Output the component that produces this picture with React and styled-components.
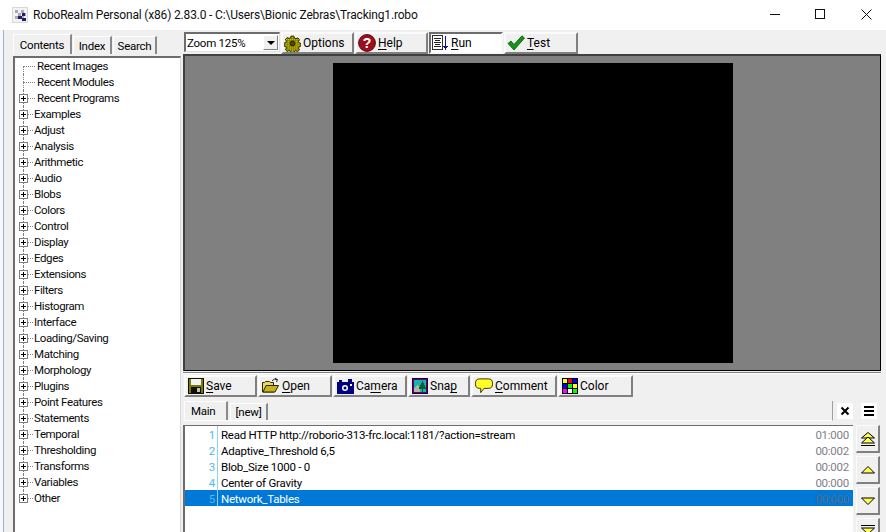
import React from 'react';
import styled, { createGlobalStyle } from 'styled-components';

const GlobalStyle = createGlobalStyle`
  html, body {
    margin: 0;
    padding: 0;
    background: #f0f0f0;
  }
  * {
    box-sizing: border-box;
  }
`;

const TREE_ITEMS = [
  'Examples', 'Adjust', 'Analysis', 'Arithmetic', 'Audio', 'Blobs', 'Colors', 'Control',
  'Display', 'Edges', 'Extensions', 'Filters', 'Histogram', 'Interface', 'Loading/Saving',
  'Matching', 'Morphology', 'Plugins', 'Point Features', 'Statements', 'Temporal',
  'Thresholding', 'Transforms', 'Variables', 'Other',
];

const PIPELINE = [
  { text: 'Read HTTP http://roborio-313-frc.local:1181/?action=stream', time: '01:000' },
  { text: 'Adaptive_Threshold 6,5', time: '00:002' },
  { text: 'Blob_Size 1000 - 0', time: '00:002' },
  { text: 'Center of Gravity', time: '00:000' },
  { text: 'Network_Tables', time: '00:000', selected: true },
];

const AppIcon = () => (
  <svg width="16" height="16" viewBox="0 0 16 16" shapeRendering="crispEdges">
    <rect width="16" height="16" fill="#d8d8d8" />
    <rect x="1" y="1" width="14" height="14" fill="#f2f2f2" />
    <path d="M3 3h3v3H3zM9 3h3v3H9zM6 6h3v3H6zM12 6h2v3h-2zM3 9h3v3H3zM9 9h3v3H9z" fill="#a8a8b8" />
    <path d="M6 9h4v3H6zM10 6h3v3h-3zM10 11h4v3h-4z" fill="#20206a" />
  </svg>
);

const GearIcon = () => (
  <svg width="17" height="17" viewBox="0 0 17 17">
    <defs>
      <pattern id="gearDither" width="2" height="2" patternUnits="userSpaceOnUse">
        <rect width="2" height="2" fill="#8a8000" />
        <rect width="1" height="1" fill="#d8d000" />
      </pattern>
    </defs>
    <path
      d="M7 1h3l.5 2 1.7.8L14 2.8l1.9 2-1 1.8.7 1.6 2 .6v2.600l-2 .6-.7 1.700 1 1.700-2 1.900-1.800-1-1.600.6-.5 2H7l-.5-2-1.700-.7-1.800 1-1.900-1.900 1-1.800-.7-1.600-2-.6V8.400l2-.6.7-1.600-1-1.800 1.900-2 1.800 1 1.600-.7z"
      transform="translate(.4 .2) scale(.95)"
      fill="url(#gearDither)"
      stroke="#1c1c00"
      strokeWidth="1"
    />
    <circle cx="8.500" cy="8.500" r="2.400" fill="#504a00" stroke="#1c1c00" />
  </svg>
);

const HelpIcon = () => (
  <svg width="18" height="18" viewBox="0 0 18 18">
    <circle cx="9" cy="9" r="8.400" fill="#9c0f1c" stroke="#5c0a10" />
    <path d="M4 6a6 5 0 0 1 10 0" fill="#c95560" opacity=".6" />
    <text x="9" y="14" textAnchor="middle" fontFamily="Liberation Sans, sans-serif" fontWeight="700" fontSize="14" fill="#fff">?</text>
  </svg>
);

const RunIcon = () => (
  <svg width="17" height="16" viewBox="0 0 17 16" shapeRendering="crispEdges">
    <rect x=".5" y=".5" width="10" height="14" fill="#fff" stroke="#303030" />
    <path d="M2 3h7v1H2zM3 5h5v1H3zM2 7h7v1H2zM3 9h5v1H3zM2 11h7v1H2z" fill="#202020" />
    <path d="M13 1h1v10h2l-2.500 4L11 11h2z" fill="#101080" />
  </svg>
);

const CheckIcon = () => (
  <svg width="18" height="16" viewBox="0 0 18 16">
    <path d="M1 8.500 4 6l3 3.500L15 .8 17.500 3 7 15z" fill="#149614" stroke="#0a4f0a" strokeWidth=".8" />
  </svg>
);

const SaveIcon = () => (
  <svg width="16" height="16" viewBox="0 0 16 16" shapeRendering="crispEdges">
    <rect width="16" height="16" fill="#101000" />
    <rect x="1" y="1" width="14" height="14" fill="#7b7b00" />
    <rect x="3" y="1" width="10" height="6" fill="#f2f2f2" />
    <rect x="3" y="9" width="10" height="6" fill="#101000" />
    <rect x="9" y="10" width="3" height="4" fill="#c0c0c0" />
  </svg>
);

const OpenIcon = () => (
  <svg width="18" height="16" viewBox="0 0 18 16">
    <path d="M.5 14V4.500h2l1-1h4l1 1h3v3h4l-3.500 6.500z" fill="#e8d860" stroke="#2a2a00" />
    <path d="M1 14l3-6.500h12.500L13 14z" fill="#c8b020" stroke="#2a2a00" />
    <path d="M10 3q2-3 5-1.500M13 .5l2.500 1-1 2.500" fill="none" stroke="#202020" />
  </svg>
);

const CameraIcon = () => (
  <svg width="17" height="15" viewBox="0 0 17 15" shapeRendering="crispEdges">
    <rect y="3" width="17" height="12" fill="#000080" />
    <rect x="2" y="1" width="3" height="2" fill="#000080" />
    <rect x="11" y="0" width="4" height="3" fill="#000080" />
    <rect x="13" y="5" width="2" height="2" fill="#fff" />
    <circle cx="8" cy="9" r="3" fill="#fff" shapeRendering="auto" />
    <circle cx="8" cy="9" r="1.500" fill="#000080" shapeRendering="auto" />
  </svg>
);

const SnapIcon = () => (
  <svg width="16" height="16" viewBox="0 0 16 16" shapeRendering="crispEdges">
    <rect width="16" height="16" fill="#000080" />
    <rect x="1" y="1" width="14" height="14" fill="#800020" />
    <rect x="2" y="2" width="12" height="12" fill="#18b0b0" />
    <path d="M2 14v-3l3-4 3 3v4z" fill="#c0b0a0" />
    <path d="M10 3h1v2h1v2h1v2h1v2h-3v3h-1v-3H7V9h1V7h1V5h1z" fill="#006030" />
  </svg>
);

const CommentIcon = () => (
  <svg width="18" height="16" viewBox="0 0 19 16">
    <defs>
      <pattern id="bubbleDither" width="2" height="2" patternUnits="userSpaceOnUse">
        <rect width="2" height="2" fill="#ffff00" />
        <rect width="1" height="1" fill="#ffffa0" />
      </pattern>
    </defs>
    <path d="M5 .5h9q4.500 0 4.500 4.500v1q0 4.500-4.500 4.500H9.500L6 15v-4.500H5Q.5 10.500.5 6V5Q.5.5 5 .5z" fill="url(#bubbleDither)" stroke="#303000" />
  </svg>
);

const COLOR_GRID = ['#ffff00', '#ff0000', '#0000ff', '#0000ff', '#00ff00', '#ffff00', '#ff00ff', '#ffffff', '#00ff00'];

const ColorIcon = () => (
  <svg width="16" height="16" viewBox="0 0 16 16" shapeRendering="crispEdges">
    <rect width="16" height="16" fill="#000" />
    {COLOR_GRID.map((fill, i) => (
      <rect key={i} x={1 + (i % 3) * 5} y={1 + Math.floor(i / 3) * 5} width="4" height="4" fill={fill} />
    ))}
  </svg>
);

const ArrowIcon = ({ double, down }) => (
  <svg width="18" height="16" viewBox="0 0 18 16" style={{ transform: down ? 'scaleY(-1)' : undefined }}>
    <defs>
      <pattern id="arrowDither" width="2" height="2" patternUnits="userSpaceOnUse">
        <rect width="2" height="2" fill="#ffff30" />
        <rect width="1" height="1" fill="#ffffc0" />
      </pattern>
    </defs>
    {double ? (
      <>
        <path d="M9 1.500 15.500 7h-13z" fill="url(#arrowDither)" stroke="#000" />
        <path d="M9 6l6.500 6h-13z" fill="url(#arrowDither)" stroke="#000" />
        <path d="M2 14.500h14" stroke="#000" />
      </>
    ) : (
      <path d="M9 4.500l6.500 6.500h-13z" fill="url(#arrowDither)" stroke="#000" />
    )}
  </svg>
);

const App = () => (
  <>
    <GlobalStyle />
    <Window>
      <EdgeStrip />
      <Frame>
        <TitleBar>
          <AppIcon />
          <TitleText>RoboRealm Personal (x86) 2.83.0 - C:\Users\Bionic Zebras\Tracking1.robo</TitleText>
          <WindowControls>
            <WindowButton>
              <svg width="11" height="11" viewBox="0 0 11 11" shapeRendering="crispEdges"><path d="M0 5h10v1H0z" fill="#111" /></svg>
            </WindowButton>
            <WindowButton>
              <svg width="11" height="11" viewBox="0 0 11 11" shapeRendering="crispEdges"><rect x=".5" y=".5" width="9" height="9" fill="none" stroke="#111" /></svg>
            </WindowButton>
            <CloseButton>
              <svg width="11" height="11" viewBox="0 0 11 11"><path d="M.5.5l10 10M10.500.5l-10 10" stroke="#111" fill="none" /></svg>
            </CloseButton>
          </WindowControls>
        </TitleBar>
        <Workspace>
          <Sidebar>
            <SideTabs>
              <SideTab $active $width={59}>Contents</SideTab>
              <SideTab $width={39}>Index</SideTab>
              <SideTab $width={44}>Search</SideTab>
            </SideTabs>
            <Tree>
              <TreeRow $deep $first><TreeLabel $deep>Recent Images</TreeLabel></TreeRow>
              <TreeRow $deep><TreeLabel $deep>Recent Modules</TreeLabel></TreeRow>
              <TreeRow $deep><Expander /><TreeLabel $deep>Recent Programs</TreeLabel></TreeRow>
              {TREE_ITEMS.map((item, i) => (
                <TreeRow key={item} $last={i === TREE_ITEMS.length - 1}>
                  <Expander />
                  <TreeLabel>{item}</TreeLabel>
                </TreeRow>
              ))}
            </Tree>
          </Sidebar>
          <Content>
            <Toolbar>
              <ZoomSelect>
                <ZoomValue>Zoom 125%</ZoomValue>
                <ZoomArrow />
              </ZoomSelect>
              <TopGroup>
                <ToolButton $width={73}><GearIcon /><span>Options</span></ToolButton>
                <ToolButton $width={73}><HelpIcon /><span><u>H</u>elp</span></ToolButton>
                <ToolButton $width={74} $pressed><RunIcon /><span><u>R</u>un</span></ToolButton>
                <ToolButton $width={74}><CheckIcon /><span><u>T</u>est</span></ToolButton>
              </TopGroup>
            </Toolbar>
            <Preview>
              <VideoFrame />
            </Preview>
            <Divider />
            <BottomToolbar>
              <ToolButton $width={73}><SaveIcon /><span><u>S</u>ave</span></ToolButton>
              <ToolButton $width={74}><OpenIcon /><span><u>O</u>pen</span></ToolButton>
              <ToolButton $width={74}><CameraIcon /><span>Ca<u>m</u>era</span></ToolButton>
              <ToolButton $width={62}><SnapIcon /><span>Sna<u>p</u></span></ToolButton>
              <ToolButton $width={86}><CommentIcon /><span><u>C</u>omment</span></ToolButton>
              <ToolButton $width={75}><ColorIcon /><span>Color</span></ToolButton>
            </BottomToolbar>
            <ProgramTabs>
              <TabStrip>
                <ProgramTab $active>Main</ProgramTab>
                <ProgramTab>[new]</ProgramTab>
              </TabStrip>
              <TabAction>
                <svg width="10" height="10" viewBox="0 0 10 10"><path d="M1.500 1.500l7 7M8.500 1.500l-7 7" stroke="#000" strokeWidth="2" /></svg>
              </TabAction>
              <TabAction>
                <svg width="12" height="11" viewBox="0 0 12 11" shapeRendering="crispEdges"><path d="M1 0h10v2H1zM1 4h10v2H1zM1 8h10v2H1z" fill="#000" /></svg>
              </TabAction>
            </ProgramTabs>
            <PipelineArea>
              <PipelineList>
                {PIPELINE.map((step, i) => (
                  <PipelineRow key={step.text} $selected={step.selected}>
                    <StepNumber>{i + 1}</StepNumber>
                    <StepName>{step.text}</StepName>
                    <StepTime $selected={step.selected}>{step.time}</StepTime>
                  </PipelineRow>
                ))}
              </PipelineList>
              <MoveButtons>
                <MoveButton><ArrowIcon double /></MoveButton>
                <MoveButton><ArrowIcon /></MoveButton>
                <MoveButton><ArrowIcon down /></MoveButton>
                <MoveButton><ArrowIcon double down /></MoveButton>
              </MoveButtons>
            </PipelineArea>
          </Content>
        </Workspace>
      </Frame>
    </Window>
  </>
);

export default App;

const Window = styled.div`
  width: 886px;
  height: 532px;
  display: flex;
  overflow: hidden;
  background: #f0f0f0;
  color: #000;
  font-family: Roboto, "Liberation Sans", sans-serif;
  font-size: 11.5px;
  letter-spacing: -0.25px;
`;

const EdgeStrip = styled.div`
  width: 4px;
  margin-top: 30px;
  background: #f6f8fb;
  border-right: 1px solid #9fb4c6;
`;

const Frame = styled.div`
  flex: 1;
  min-width: 0;
  display: flex;
  flex-direction: column;
`;

const TitleBar = styled.div`
  height: 30px;
  flex: none;
  margin-left: -4px;
  padding-left: 12px;
  display: flex;
  align-items: center;
  background: #fff;
`;

const TitleText = styled.div`
  margin-left: 5px;
  font-size: 12px;
  letter-spacing: -0.17px;
  color: #101010;
  white-space: nowrap;
`;

const WindowControls = styled.div`
  margin-left: auto;
  padding-bottom: 1px;
  display: flex;
  height: 100%;
`;

const WindowButton = styled.div`
  width: 45px;
  display: flex;
  align-items: center;
  justify-content: center;
`;

const CloseButton = styled(WindowButton)`
  width: 43px;
  padding-left: 4px;
`;

const Workspace = styled.div`
  flex: 1;
  min-height: 0;
  display: flex;
`;

const Sidebar = styled.div`
  width: 179px;
  flex: none;
  padding: 2px 2px 0 9px;
  display: flex;
  flex-direction: column;
`;

const SideTabs = styled.div`
  height: 22px;
  margin-bottom: 2px;
  flex: none;
  display: flex;
  align-items: flex-end;
  gap: 1px;
`;

const SideTab = styled.div`
  height: ${({ $active }) => ($active ? '20px' : '18px')};
  width: ${({ $width }) => $width}px;
  display: flex;
  align-items: center;
  justify-content: center;
  border-top: 1px solid #fff;
  border-left: 1px solid #fff;
  border-right: 2px solid #8a8a8a;
  white-space: nowrap;
`;

const Tree = styled.div`
  flex: 1;
  background: #fff;
  border-top: 2px solid #6d6d6d;
  border-left: 2px solid #6d6d6d;
  border-right: 1px solid #d8d8d8;
  overflow: hidden;
  letter-spacing: -0.4px;
`;

const TreeRow = styled.div`
  position: relative;
  height: 16px;
  display: flex;
  align-items: center;
  &::before {
    content: '';
    position: absolute;
    left: 8px;
    top: ${({ $first }) => ($first ? '8px' : '0')};
    height: ${({ $first, $last }) => ($first ? '8px' : $last ? '8px' : '16px')};
    border-left: 1px dotted #808080;
  }
  &::after {
    content: '';
    position: absolute;
    left: 8px;
    top: 8px;
    width: ${({ $deep }) => ($deep ? '12px' : '10px')};
    border-top: 1px dotted #808080;
  }
`;

const Expander = styled.div`
  position: absolute;
  z-index: 1;
  left: 4px;
  top: 4px;
  width: 9px;
  height: 9px;
  background:
    linear-gradient(#000, #000) center / 5px 1px no-repeat,
    linear-gradient(#000, #000) center / 1px 5px no-repeat,
    #fff;
  border: 1px solid #808080;
`;

const TreeLabel = styled.span`
  margin-left: ${({ $deep }) => ($deep ? '22px' : '19px')};
  white-space: nowrap;
  color: #0a0a0a;
`;

const Content = styled.div`
  flex: 1;
  min-width: 0;
  padding: 2px 5px 0 0;
  display: flex;
  flex-direction: column;
`;

const Toolbar = styled.div`
  height: 22px;
  flex: none;
  display: flex;
  align-items: flex-start;
  padding-left: 1px;
`;

const ZoomSelect = styled.div`
  width: 96px;
  height: 20px;
  flex: none;
  display: flex;
  align-items: center;
  background: #fff;
  border-top: 2px solid #6d6d6d;
  border-left: 2px solid #6d6d6d;
  border-right: 1px solid #e0e0e0;
  border-bottom: 1px solid #e0e0e0;
`;

const ZoomValue = styled.div`
  flex: 1;
  padding-left: 1px;
`;

const ZoomArrow = styled.div`
  width: 15px;
  height: 15px;
  margin-right: 1px;
  display: flex;
  align-items: center;
  justify-content: center;
  background: #f0f0f0;
  border: 1px solid;
  border-color: #fff #808080 #808080 #fff;
  &::before {
    content: '';
    border-style: solid;
    border-width: 4px 4px 0;
    border-color: #000 transparent transparent;
  }
`;

const TopGroup = styled.div`
  margin-left: 1px;
  display: flex;
  gap: 1px;
`;

const ToolButton = styled.div`
  width: ${({ $width }) => $width}px;
  height: 22px;
  flex: none;
  padding-left: 1px;
  display: flex;
  align-items: center;
  gap: 2px;
  font-size: 12px;
  letter-spacing: 0;
  background: ${({ $pressed }) => ($pressed ? '#fff' : '#f0f0f0')};
  border-style: solid;
  border-width: 2px;
  border-color: ${({ $pressed }) =>
    $pressed ? '#6d6d6d #f8f8f8 #f8f8f8 #6d6d6d' : '#fbfbfb #808080 #808080 #fbfbfb'};
  white-space: nowrap;
  u {
    text-underline-offset: 2px;
  }
`;

const Preview = styled.div`
  height: 317px;
  flex: none;
  display: flex;
  align-items: center;
  justify-content: center;
  background: #808080;
  border-top: 2px solid #404040;
  border-left: 2px solid #404040;
  border-right: 1px solid #000;
  border-bottom: 1px solid #000;
`;

const VideoFrame = styled.div`
  width: 400px;
  height: 300px;
  background: #000;
`;

const Divider = styled.div`
  height: 2px;
  flex: none;
  margin-top: 1px;
  background: #808080;
  border-bottom: 1px solid #fff;
`;

const BottomToolbar = styled.div`
  height: 23px;
  flex: none;
  margin-top: 1px;
  padding-left: 1px;
  display: flex;
  gap: 1px;
  ${ToolButton} {
    padding-left: 2px;
  }
`;

const ProgramTabs = styled.div`
  height: 24px;
  flex: none;
  margin-top: 3px;
  display: flex;
  align-items: flex-start;
`;

const TabStrip = styled.div`
  flex: 1;
  height: 20px;
  padding-left: 1px;
  display: flex;
  align-items: flex-end;
  gap: 2px;
  border-bottom: 1px solid #fff;
  border-right: 1px solid #a0a0a0;
`;

const ProgramTab = styled.div`
  width: ${({ $active }) => ($active ? '44px' : '38px')};
  height: ${({ $active }) => ($active ? '19px' : '17px')};
  display: flex;
  align-items: center;
  justify-content: ${({ $active }) => ($active ? 'flex-start' : 'center')};
  padding-left: ${({ $active }) => ($active ? '6px' : '0')};
  padding-bottom: ${({ $active }) => ($active ? '1px' : '0')};
  border-top: 1px solid #fff;
  border-left: 1px solid #fff;
  border-right: 2px solid #8a8a8a;
`;

const TabAction = styled.div`
  width: 16px;
  height: 16px;
  margin: 2px 4px 0;
  display: flex;
  align-items: center;
  justify-content: center;
  background: #fff;
`;

const PipelineArea = styled.div`
  flex: 1;
  min-height: 0;
  display: flex;
`;

const PipelineList = styled.div`
  flex: 1;
  min-width: 0;
  background: #fff;
  border-top: 1px solid #6d6d6d;
  border-left: 2px solid #6d6d6d;
  overflow: hidden;
`;

const PipelineRow = styled.div`
  height: 16px;
  display: flex;
  align-items: center;
  padding-right: 4px;
  line-height: 16px;
  background: ${({ $selected }) => ($selected ? '#0078d7' : 'transparent')};
  color: ${({ $selected }) => ($selected ? '#fff' : '#000')};
`;

const StepNumber = styled.div`
  width: 33px;
  height: 100%;
  flex: none;
  padding: 1px 2px 0 0;
  text-align: right;
  color: #52b8e8;
  border-right: 1px solid #8fd4f4;
`;

const StepName = styled.div`
  flex: 1;
  padding: 1px 0 0 3px;
  white-space: nowrap;
`;

const StepTime = styled.div`
  padding-top: 1px;
  color: ${({ $selected }) => ($selected ? '#566b80' : '#808088')};
`;

const MoveButtons = styled.div`
  width: 28px;
  flex: none;
  padding-left: 3px;
  display: flex;
  flex-direction: column;
  gap: 3px;
`;

const MoveButton = styled.div`
  width: 24px;
  height: 28px;
  flex: none;
  display: flex;
  align-items: center;
  justify-content: center;
  background: #f0f0f0;
  border-style: solid;
  border-width: 1px 2px 2px 1px;
  border-color: #fbfbfb #808080 #808080 #fbfbfb;
`;
